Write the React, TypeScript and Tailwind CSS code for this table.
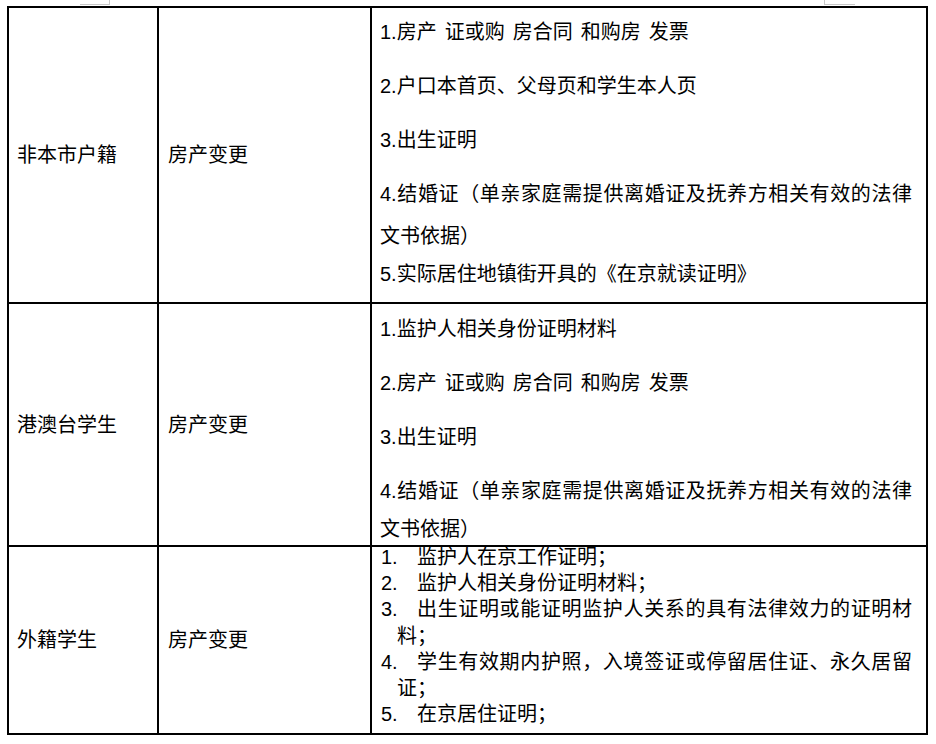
import React from "react";

const Line = ({ children, className = "" }: { children: React.ReactNode; className?: string }) => (
  <div className={"h-[26px] leading-[26px] whitespace-nowrap " + className}>{children}</div>
);

const JLine = ({ children, className = "" }: { children: React.ReactNode; className?: string }) => (
  <div className={"h-[26px] leading-[26px] text-justify [text-align-last:justify] " + className}>{children}</div>
);

const NumLine = ({ n, children, justify = false }: { n: string; children: React.ReactNode; justify?: boolean }) => (
  <div className="flex h-[26.2px] leading-[26.2px]">
    <span className="w-[37px] shrink-0 pl-[1px]">{n}</span>
    <span
      className={
        justify
          ? "flex-1 text-justify [text-align-last:justify]"
          : "flex-1 whitespace-nowrap"
      }
    >
      {children}
    </span>
  </div>
);

const WrapLine = ({ children }: { children: React.ReactNode }) => (
  <div className="h-[26.2px] leading-[26.2px] whitespace-nowrap pl-[17px]">{children}</div>
);

export default function App() {
  return (
    <div className="relative min-h-[744px] w-[936px] bg-white text-[20px] text-black font-['Liberation_Sans','Noto_Sans_CJK_SC',sans-serif]">
      {/* page corner marks */}
      <div className="absolute left-[80px] top-0 h-[5px] w-[30px] border-b border-r border-[#c8c8c8]" />
      <div className="absolute left-[824px] top-0 h-[5px] w-[31px] border-b border-l border-[#c8c8c8]" />

      <div className="pl-[7px] pt-[6px]">
        <div className="w-[921px] border-2 border-black">
          {/* Row 1 */}
          <div className="grid h-[294px] grid-cols-[148px_213px_556px]">
            <div className="flex items-center pl-[8px]">非本市户籍</div>
            <div className="flex items-center border-l-2 border-black pl-[9px]">房产变更</div>
            <div className="border-l-2 border-black pl-[8px] pr-[14px] pt-[11px]">
              <Line>
                1.<span>房产</span>
                <span className="ml-[8px]">证或购</span>
                <span className="ml-[8px]">房合同</span>
                <span className="ml-[8px]">和购房</span>
                <span className="ml-[8px]">发票</span>
              </Line>
              <Line className="mt-[28px]">2.户口本首页、父母页和学生本人页</Line>
              <Line className="mt-[28px]">3.出生证明</Line>
              <JLine className="mt-[28px]">4.结婚证（单亲家庭需提供离婚证及抚养方相关有效的法律</JLine>
              <Line className="mt-[16px]">文书依据）</Line>
              <Line className="mt-[12px]">5.实际居住地镇街开具的《在京就读证明》</Line>
            </div>
          </div>

          {/* Row 2 */}
          <div className="grid h-[243px] grid-cols-[148px_213px_556px] border-t-2 border-black">
            <div className="flex items-center pl-[8px]">港澳台学生</div>
            <div className="flex items-center border-l-2 border-black pl-[9px]">房产变更</div>
            <div className="border-l-2 border-black pl-[8px] pr-[14px] pt-[12px]">
              <Line>1.监护人相关身份证明材料</Line>
              <Line className="mt-[28px]">
                2.<span>房产</span>
                <span className="ml-[8px]">证或购</span>
                <span className="ml-[8px]">房合同</span>
                <span className="ml-[8px]">和购房</span>
                <span className="ml-[8px]">发票</span>
              </Line>
              <Line className="mt-[28px]">3.出生证明</Line>
              <JLine className="mt-[28px]">4.结婚证（单亲家庭需提供离婚证及抚养方相关有效的法律</JLine>
              <Line className="mt-[12px]">文书依据）</Line>
            </div>
          </div>

          {/* Row 3 */}
          <div className="grid h-[188px] grid-cols-[148px_213px_556px] border-t-2 border-black">
            <div className="flex items-center pl-[8px]">外籍学生</div>
            <div className="flex items-center border-l-2 border-black pl-[9px]">房产变更</div>
            <div className="border-l-2 border-black pl-[8px] pr-[14px]">
              <div className="-mt-[3px]">
                <NumLine n="1.">监护人在京工作证明；</NumLine>
                <NumLine n="2.">监护人相关身份证明材料；</NumLine>
                <NumLine n="3." justify>
                  出生证明或能证明监护人关系的具有法律效力的证明材
                </NumLine>
                <WrapLine>料；</WrapLine>
                <NumLine n="4." justify>
                  学生有效期内护照，入境签证或停留居住证、永久居留
                </NumLine>
                <WrapLine>证；</WrapLine>
                <NumLine n="5.">在京居住证明；</NumLine>
              </div>
            </div>
          </div>
        </div>
      </div>
    </div>
  );
}
